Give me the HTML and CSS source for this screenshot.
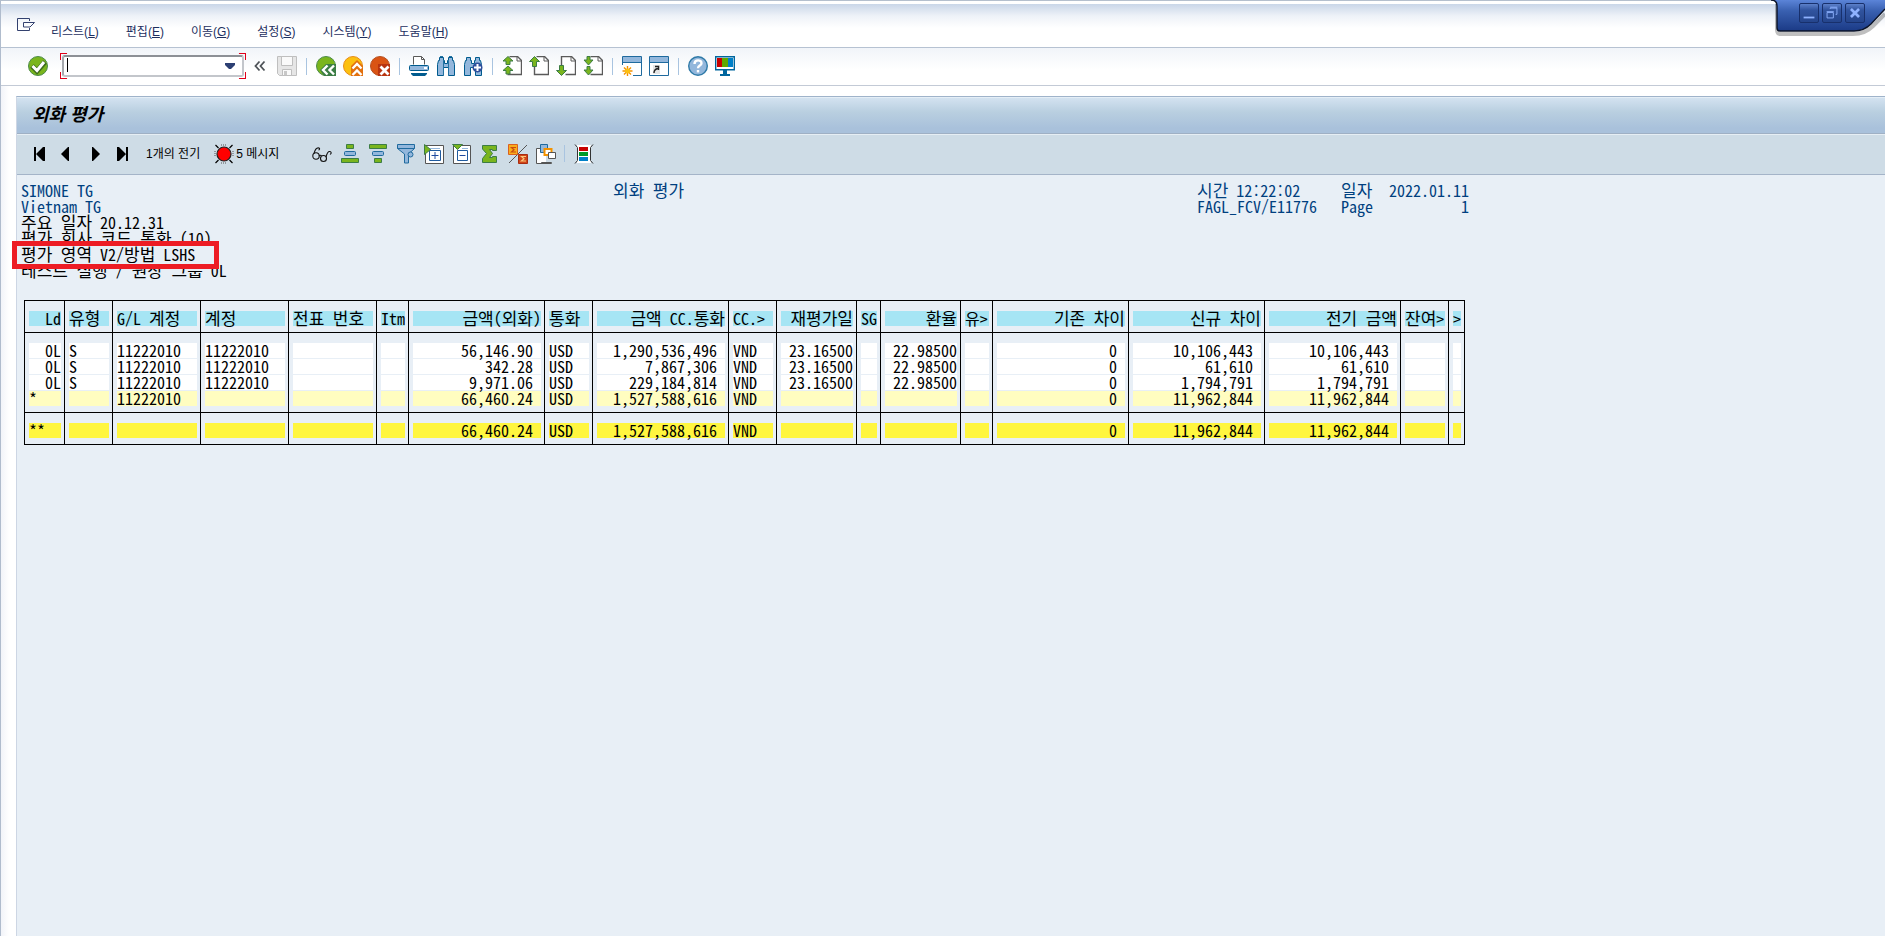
FILE: index.html
```html
<!DOCTYPE html>
<html lang="ko">
<head>
<meta charset="utf-8">
<title>외화 평가</title>
<link rel="stylesheet" href="styles.css">
</head>
<body>
<div class="window">
  <nav class="menubar">
    <button class="sysmenu" aria-label="메뉴"><svg width="20" height="16" viewBox="0 0 20 16" fill="none" stroke="#33416f" stroke-width="1"><path d="M12.500 3V.5H.5v12h12V10M6.500 4.500h11l-4.500 4.500H6.500z"/></svg></button>
    <a href="#">리스트(<u>L</u>)</a>
    <a href="#">편집(<u>E</u>)</a>
    <a href="#">이동(<u>G</u>)</a>
    <a href="#">설정(<u>S</u>)</a>
    <a href="#">시스템(<u>Y</u>)</a>
    <a href="#">도움말(<u>H</u>)</a>
  </nav>

  <div class="toolbar">
    <button class="tool" aria-label="실행"><svg viewBox="0 0 20 20"><circle cx="10" cy="10" r="9.500" fill="#7ab51d" stroke="#4c8b4a"/><path d="M4 10l5 5 8-9" fill="none" stroke="#3c6b1d" stroke-width="5"/><path d="M4.500 10l4.500 4.500 7-8.500" fill="none" stroke="#fff" stroke-width="3"/></svg></button>
    <div class="command">
      <input type="text" aria-label="명령 필드">
      <span class="caret"></span>
      <button class="drop" aria-label="이력"><svg width="12" height="8" viewBox="0 0 12 8"><path d="M1 1h10v2L7 7H5L1 3z" fill="#2c3f73"/></svg></button>
      <svg class="focus" viewBox="0 0 185 26" preserveAspectRatio="none"><path d="M.5 7V.5H7M178 .5h6.500V7M.5 19v6.500H7M178 25.500h6.500V19" fill="none" stroke="#e0001a"/></svg>
    </div>
    <button class="collapse" aria-label="접기"><svg width="12" height="12" viewBox="0 0 12 12"><path d="M5.500 1.500L1.500 6l4 4.500M10.500 1.500L6.500 6l4 4.500" fill="none" stroke="#4d5257" stroke-width="1.800"/></svg></button>
    <button class="tool" aria-label="저장"><svg viewBox="0 0 20 20"><path d="M.5.5h19v19h-17l-2-2z" fill="#e6e6e6" stroke="#bfbfbf"/><path d="M4.500.5h11v9h-11zM5.500 13.500h9v6h-9z" fill="#fafafa" stroke="#bfbfbf"/><path d="M7 15h3v4H7z" fill="#c8c8c8"/></svg></button>
    <span class="sep"></span>
    <button class="tool" aria-label="뒤로"><svg viewBox="0 0 20 20"><circle cx="10" cy="10" r="9.500" fill="#7ab51d" stroke="#4c8b4a"/><path d="M4 14l6-6h10v12H8z" fill="#3c7d45"/><path d="M11.500 9.500L7 14l4.500 4.500M18 9.500L13.500 14l4.500 4.500" fill="none" stroke="#fff" stroke-width="2.400"/></svg></button>
    <button class="tool" aria-label="종료"><svg viewBox="0 0 20 20"><circle cx="10" cy="10" r="9.500" fill="#fcc010" stroke="#e78c1a"/><path d="M8 10l6-6 6 6v10H8z" fill="#e2700e"/><path d="M9.500 12.500L14 8l4.500 4.500M9.500 19l4.500-4.500 4.500 4.500" fill="none" stroke="#fff" stroke-width="2.400"/></svg></button>
    <button class="tool" aria-label="취소"><svg viewBox="0 0 20 20"><circle cx="10" cy="10" r="9.500" fill="#da5414" stroke="#b5501f"/><path d="M8 8h12v12H8z" fill="#b83410"/><path d="M10.500 10.500l8 8M18.500 10.500l-8 8" fill="none" stroke="#fff" stroke-width="2.800"/></svg></button>
    <span class="sep"></span>
    <button class="tool" aria-label="인쇄"><svg viewBox="0 0 20 20"><path d="M4.500 8.500v-8h8l3 3v5" fill="#fff" stroke="#5a5a5a"/><path d="M12.500.5v3h3" fill="none" stroke="#5a5a5a"/><rect x=".5" y="9.500" width="19" height="5" rx="1" fill="#93b7dc" stroke="#005b8e"/><path d="M15 11h3v2h-3z" fill="#fff"/><path d="M2 17h16v1l-2 2H4l-2-2z" fill="#005b8e"/></svg></button>
    <button class="tool" aria-label="찾기"><svg viewBox="0 0 20 20"><path d="M3.500 1.500h4v3h1v3h3v-3h1v-3h4v3h1l1 4v11h-6v-8h-5v8h-6v-11l1-4h1z" fill="#93b7dc" stroke="#005b8e"/><path d="M4 .5h3M13 .5h3M7.500 5v14M12.500 5v14" stroke="#2272a2"/></svg></button>
    <button class="tool" aria-label="다음 찾기"><svg viewBox="0 0 20 20"><path d="M3.500 1.500h4v3h1v3h3v-3h1v-3h4v3h1l1 4v11h-6v-8h-5v8h-6v-11l1-4h1z" fill="#93b7dc" stroke="#005b8e"/><circle cx="14.500" cy="11.500" r="5" fill="#2d4f9c"/><path d="M14.500 8v7M11 11.500h7" stroke="#fff" stroke-width="2"/></svg></button>
    <span class="sep"></span>
    <button class="tool" aria-label="첫 페이지"><svg viewBox="0 0 20 20"><path d="M7.500.5h8l4 4v14h-14" fill="#fff" stroke="#5a5a5a" stroke-width="1.400"/><path d="M15 1v4h4" fill="none" stroke="#5a5a5a"/><path d="M6 .5l5 4.500H8v3.500H4V5H1zM6 10l5 4.500H8V18H4v-3.500H1z" fill="#7ab51d" stroke="#3c7d45"/></svg></button>
    <button class="tool" aria-label="이전 페이지"><svg viewBox="0 0 20 20"><path d="M7.500.5h8l4 4v14h-14V10" fill="#fff" stroke="#5a5a5a" stroke-width="1.400"/><path d="M15 1v4h4" fill="none" stroke="#5a5a5a"/><path d="M5.500 .5l5 5H7.500v5h-4v-5h-3z" fill="#7ab51d" stroke="#3c7d45"/></svg></button>
    <button class="tool" aria-label="다음 페이지"><svg viewBox="0 0 20 20"><path d="M5.500 10V.5h10l4 4v14h-10" fill="#fff" stroke="#5a5a5a" stroke-width="1.400"/><path d="M15 1v4h4" fill="none" stroke="#5a5a5a"/><path d="M5.500 19.500l5-5H7.500v-5h-4v5h-3z" fill="#7ab51d" stroke="#3c7d45"/></svg></button>
    <button class="tool" aria-label="마지막 페이지"><svg viewBox="0 0 20 20"><path d="M7.500.5h8l4 4v14h-12" fill="#fff" stroke="#5a5a5a" stroke-width="1.400"/><path d="M15 1v4h4" fill="none" stroke="#5a5a5a"/><path d="M4 .5h3V4h3L5.500 9 1 4h3zM4 10.500h3V14h3l-4.500 5L1 14h3z" fill="#7ab51d" stroke="#3c7d45"/></svg></button>
    <span class="sep"></span>
    <button class="tool" aria-label="새 세션"><svg viewBox="0 0 20 20"><path d="M.5.5h19v19H.5z" fill="#fff" stroke="#1f6a9e"/><path d="M1 1h18v5H1z" fill="#93b7dc"/><path d="M0 6.500h20" stroke="#1f6a9e"/><path d="M0 9h11v11H0z" fill="#fff"/><path d="M5.500 10v10M.5 15h10M2 11.500l7 7M9 11.500l-7 7" stroke="#f39200" stroke-width="1.400"/><circle cx="5.500" cy="15" r="2.500" fill="#fcc010"/></svg></button>
    <button class="tool" aria-label="바로가기 생성"><svg viewBox="0 0 20 20"><path d="M.5.5h19v19H.5z" fill="#fff" stroke="#1f6a9e"/><path d="M1 1h18v5H1z" fill="#93b7dc"/><path d="M0 6.500h20" stroke="#1f6a9e"/><path d="M4 9h7v9H4z" fill="#e5e5e5"/><path d="M5 17c0-3 1-4 4-4.500M6 10.500h3.500V14" fill="none" stroke="#222" stroke-width="1.400"/></svg></button>
    <span class="sep"></span>
    <button class="tool" aria-label="도움말"><svg viewBox="0 0 20 20"><circle cx="10" cy="10" r="9.300" fill="#93b7dc" stroke="#2f7aa8" stroke-width="1.400"/><path d="M6.500 8c0-5 7-4.500 7-.8 0 2.500-3.500 2.300-3.500 5" fill="none" stroke="#fff" stroke-width="2.400"/><path d="M8.800 14h2.400v2.400H8.800z" fill="#fff"/></svg></button>
    <button class="tool" aria-label="레이아웃 사용자 정의"><svg viewBox="0 0 20 20"><path d="M.7.7h18.600v13H.7z" fill="#fff" stroke="#00669e" stroke-width="1.400"/><path d="M2 2h5v9H2z" fill="#c80000"/><path d="M7 2h6v9H7z" fill="#5fa800"/><path d="M13 2h5v9h-5z" fill="#0080c8"/><path d="M8 14h4v4h3v2H5v-2h3z" fill="#00669e"/></svg></button>
  </div>

  <main class="panel">
    <h1 class="title">외화 평가</h1>
    <div class="toolbar app">
      <button class="tool" aria-label="처음"><svg viewBox="0 0 20 20"><path d="M5 3h2v14H5zM16 3v14h-2l-7-7 7-7z"/></svg></button>
      <button class="tool" aria-label="이전"><svg viewBox="0 0 20 20"><path d="M12 3v14h-1L4 10l7-7z"/></svg></button>
      <button class="tool" aria-label="다음"><svg viewBox="0 0 20 20"><path d="M7 3v14h1l7-7-7-7z"/></svg></button>
      <button class="tool" aria-label="마지막"><svg viewBox="0 0 20 20"><path d="M4 3v14h2l7-7-7-7zM13 3h2v14h-2z"/></svg></button>
      <button class="textbtn postings">1개의 전기</button>
      <button class="textbtn messages"><svg width="20" height="20" viewBox="0 0 20 20"><path d="M1.500 1l3 3M18.500 1l-3 3M1.500 19l3-3M18.500 19l-3-3" stroke="#000" stroke-width="1.200"/><path d="M7 1h6M7 19h6M1 7v6M19 7v6" stroke="#555" stroke-dasharray="1 1"/><circle cx="10" cy="10" r="7" fill="#f00" stroke="#222" stroke-width="1.200"/></svg>5 메시지</button>
      <button class="tool first" aria-label="상세"><svg viewBox="0 0 20 20" fill="none" stroke="#111" stroke-width="1.100"><circle cx="4" cy="12" r="3.200"/><circle cx="11.500" cy="14.500" r="3"/><path d="M2 9.500c1-4 3-6 5-5.500 1 .5.500 2-.5 2M7 12c1-1 2-1 2.500 0M14 13c1-4 2-6 4-5.500 2 .5 1 3 0 2.500"/></svg></button>
      <button class="tool" aria-label="오름차순"><svg viewBox="0 0 20 20"><path d="M6.500.5h7v4h-7zM1.500 14.500h17v4h-17z" fill="#7ab51d" stroke="#3c7d45"/><rect x="4.500" y="7.500" width="11" height="4" rx="1" fill="#93b7dc" stroke="#1f6a9e"/></svg></button>
      <button class="tool" aria-label="내림차순"><svg viewBox="0 0 20 20"><path d="M1.500.5h17v4h-17zM6.500 14.500h7v4h-7z" fill="#7ab51d" stroke="#3c7d45"/><rect x="4.500" y="7.500" width="11" height="4" rx="1" fill="#93b7dc" stroke="#1f6a9e"/></svg></button>
      <button class="tool" aria-label="필터"><svg viewBox="0 0 20 20"><path d="M1.500.5h17v4L12.500 10v9h-4v-9l-7-5.500z" fill="#93b7dc" stroke="#1f6a9e"/><path d="M1.500 4.500h17" stroke="#1f6a9e"/><circle cx="14.500" cy="10.500" r="2.500" fill="#93b7dc" stroke="#1f6a9e"/></svg></button>
      <button class="tool" aria-label="확장"><svg viewBox="0 0 20 20"><path d="M1.500 1.500h18v18h-18z" fill="#fff" stroke="#555"/><path d="M6 4h10v1H6z" fill="#93b7dc"/><path d="M5.500 6.500h11v10h-11z" fill="#fff" stroke="#1f5a9e"/><path d="M11 8v7M7.500 11.500h7" stroke="#1f4a9e"/><path d="M.5.5v10l6-5z" fill="#7ab51d" stroke="#3c7d45"/></svg></button>
      <button class="tool" aria-label="축소"><svg viewBox="0 0 20 20"><path d="M1.500 1.500h17v18h-17z" fill="#fff" stroke="#555"/><path d="M10 4h6v1h-6z" fill="#93b7dc"/><path d="M5.500 6.500h10v10h-10z" fill="#fff" stroke="#1f5a9e"/><path d="M7.500 11.500h6" stroke="#1f4a9e"/><path d="M.5.5h10l-5 5z" fill="#7ab51d" stroke="#3c7d45"/></svg></button>
      <button class="tool" aria-label="합계"><svg viewBox="0 0 20 20"><path d="M2.500 1.500h14v5h-4v-1h-3l3 4-3 4h3v-1h4v6h-14v-4l4-5-4-4.500z" fill="#7ab51d" stroke="#3c7d45"/></svg></button>
      <button class="tool" aria-label="소계"><svg viewBox="0 0 20 20"><path d="M19 1L1 19" stroke="#555"/><path d="M.5.500h9v10h-9z" fill="#f9ad1b" stroke="#da6020"/><path d="M8 3.500H3.500L6 5.700 3.500 8H8" fill="none" stroke="#c84a10" stroke-width="1.200"/><path d="M10.500 10.500h9v9h-9z" fill="#d14416" stroke="#a82c10"/><path d="M18 12.500h-4.500l2.500 2.300-2.500 2.200H18" fill="none" stroke="#fbc77a" stroke-width="1.200"/></svg></button>
      <button class="tool" aria-label="레이아웃"><svg viewBox="0 0 20 20"><path d="M.5 4.500h5v14h10v1H.5z" fill="#fff" stroke="#555"/><path d="M1 5h9v13H1z" fill="#fff"/><path d="M4.500.5h7v8h-7z" fill="#93b7dc" stroke="#1f6a9e"/><path d="M8.500 5h7v6h-7z" fill="#fff" stroke="#f39200" stroke-width="2"/><path d="M12.500 8.500h7v6h-7z" fill="#fff" stroke="#555"/></svg></button>
      <span class="sep"></span>
      <button class="tool" aria-label="색상 범례"><svg viewBox="0 0 20 20"><path d="M3 1h14v18H3z" fill="#fff"/><path d="M1 .5l2.500 3v13L1 19.500M19 .5l-2.500 3v13l2.500 3" fill="none" stroke="#333"/><path d="M5 3h9v4H5z" fill="#c80000"/><path d="M5 8h9v4H5z" fill="#009a28"/><path d="M5 13h9v4H5z" fill="#0080c8"/></svg></button>
    </div>

    <section class="list">
      <header class="listhead">
        <span>SIMONE TG</span><span class="k">외화 평가</span><span><span class="k">시간</span> 12:22:02</span><span class="k">일자</span><span class="r">2022.01.11</span>
        <span>Vietnam TG</span><span></span><span>FAGL_FCV/E11776</span><span>Page</span><span class="r">1</span>
      </header>
      <div class="params">
        <p><span class="k">주요 일자</span> 20.12.31</p>
        <p><span class="k">평가 회사 코드 통화</span> (10)</p>
        <p class="marked"><span class="box"><span class="k">평가 영역</span> V2/<span class="k">방법</span> LSHS</span></p>
        <p><span class="k">테스트 실행</span> / <span class="k">원장 그룹</span> 0L</p>
      </div>
      <table class="grid">
        <colgroup><col class="c5"><col class="c6"><col class="c11"><col class="c11"><col class="c11"><col class="c4"><col class="c17"><col class="c6"><col class="c17"><col class="c6"><col class="c10"><col class="c3"><col class="c10"><col class="c4"><col class="c17"><col class="c17"><col class="c17"><col class="c6"><col class="c2"></colgroup>
        <thead>
          <tr><th class="r">Ld</th><th><span class="k">유형</span></th><th>G/L <span class="k">계정</span></th><th><span class="k">계정</span></th><th><span class="k">전표 번호</span></th><th>Itm</th><th class="r"><span class="k">금액</span>(<span class="k">외화</span>)</th><th><span class="k">통화</span></th><th class="r"><span class="k">금액</span> CC.<span class="k">통화</span></th><th>CC.&gt;</th><th class="r"><span class="k">재평가일</span></th><th>SG</th><th class="r"><span class="k">환율</span></th><th>유&gt;</th><th class="r"><span class="k">기존 차이</span></th><th class="r"><span class="k">신규 차이</span></th><th class="r"><span class="k">전기 금액</span></th><th><span class="k">잔여</span>&gt;</th><th>&gt;</th></tr>
        </thead>
        <tbody>
          <tr class="top"><td class="r">0L</td><td>S</td><td>11222010</td><td>11222010</td><td></td><td></td><td class="amt">56,146.90</td><td>USD</td><td class="amt">1,290,536,496</td><td>VND</td><td class="r">23.16500</td><td></td><td class="r">22.98500</td><td></td><td class="amt">0</td><td class="amt">10,106,443</td><td class="amt">10,106,443</td><td></td><td></td></tr>
          <tr><td class="r">0L</td><td>S</td><td>11222010</td><td>11222010</td><td></td><td></td><td class="amt">342.28</td><td>USD</td><td class="amt">7,867,306</td><td>VND</td><td class="r">23.16500</td><td></td><td class="r">22.98500</td><td></td><td class="amt">0</td><td class="amt">61,610</td><td class="amt">61,610</td><td></td><td></td></tr>
          <tr><td class="r">0L</td><td>S</td><td>11222010</td><td>11222010</td><td></td><td></td><td class="amt">9,971.06</td><td>USD</td><td class="amt">229,184,814</td><td>VND</td><td class="r">23.16500</td><td></td><td class="r">22.98500</td><td></td><td class="amt">0</td><td class="amt">1,794,791</td><td class="amt">1,794,791</td><td></td><td></td></tr>
          <tr class="sub"><td>*</td><td></td><td>11222010</td><td></td><td></td><td></td><td class="amt">66,460.24</td><td>USD</td><td class="amt">1,527,588,616</td><td>VND</td><td></td><td></td><td></td><td></td><td class="amt">0</td><td class="amt">11,962,844</td><td class="amt">11,962,844</td><td></td><td></td></tr>
        </tbody>
        <tfoot>
          <tr><td>**</td><td></td><td></td><td></td><td></td><td></td><td class="amt">66,460.24</td><td>USD</td><td class="amt">1,527,588,616</td><td>VND</td><td></td><td></td><td></td><td></td><td class="amt">0</td><td class="amt">11,962,844</td><td class="amt">11,962,844</td><td></td><td></td></tr>
        </tfoot>
      </table>
    </section>
  </main>

  <div class="controls">
    <svg class="tab" viewBox="0 0 114 37"><defs><linearGradient id="tabfill" x1="0" y1="0" x2="0" y2="1"><stop offset="0" stop-color="#5b84d8"/><stop offset=".35" stop-color="#3960b0"/><stop offset="1" stop-color="#1b3a86"/></linearGradient></defs><path d="M6 4v26q0 4 4 4h72q12 0 20-8l12-12" fill="none" stroke="#000" stroke-opacity=".25" stroke-width="4"/><path d="M0 0q6 0 6 6v22q0 3 3 3h74q10 0 17-7l14-15V0z" fill="url(#tabfill)"/><path d="M0 0q6 0 6 6v22q0 3 3 3h74q10 0 17-7l14-15" fill="none" stroke="#0a1226" stroke-width="1.400"/></svg>
    <div class="winbtns">
      <button aria-label="최소화"><svg viewBox="0 0 20 20"><path d="M4 14h12v2H4z" fill="#8fb2ff"/></svg></button>
      <button aria-label="복원"><svg viewBox="0 0 20 20" fill="none" stroke="#8fb2ff"><path d="M4.500 9.500h7v6h-7zM4 8.500h8M8 5.500v-1h7.500v7H14M8 3.500h8"/></svg></button>
      <button aria-label="닫기"><svg viewBox="0 0 20 20"><path d="M5.500 5.500l9 9M14.500 5.500l-9 9" stroke="#8fb2ff" stroke-width="3"/></svg></button>
    </div>
  </div>
</div>
</body>
</html>
```
FILE: styles.css
```css
* { box-sizing: border-box; }

body {
  margin: 0;
  background: #fff;
  color: #000;
  font: 12px/16px "Liberation Sans", "Noto Sans CJK KR", sans-serif;
}

button {
  padding: 0;
  border: 0;
  background: none;
  font: inherit;
  color: inherit;
}

svg { display: block; }

.window {
  position: relative;
  display: flex;
  flex-direction: column;
  min-height: 100vh;
  border-left: 1px solid #b0bccd;
  border-top: 1px solid #b4bfcd;
  background: linear-gradient(to right, #f2f4f9, #fff 8px);
}

.menubar {
  display: flex;
  align-items: flex-start;
  gap: 27px;
  height: 47px;
  padding: 17px 16px 0;
  border-top: 3px solid #fff;
  border-bottom: 1px solid #b6c2d2;
  background: linear-gradient(#c9d6e8, #eef2f8 12px, #fff 24px);
  color: #1d2f5f;
}

.menubar a {
  padding-top: 3px;
  color: inherit;
  text-decoration: none;
}

.sysmenu {
  width: 20px;
  margin-right: -13px;
  margin-top: -3px;
}

.toolbar {
  display: flex;
  align-items: center;
  gap: 7px;
  height: 38px;
  padding: 0 27px 1px;
  border-bottom: 1px solid #c3cad6;
  background: linear-gradient(#f1f4f9, #fff 22px);
}

.tool,
.tool svg {
  width: 20px;
  height: 20px;
}

.tool { flex: none; }

.sep {
  flex: none;
  width: 5px;
  height: 17px;
  border-left: 2px solid transparent;
  border-right: 2px solid transparent;
  background: #a9c4e0 padding-box;
}

.command {
  position: relative;
  display: flex;
  width: 182px;
  margin: 0 3px 0 7px;
  border: 2px solid #a6a9ae;
  border-color: #8d9096 #c3c6cb #c3c6cb #a6a9ae;
  border-radius: 3px;
  background: #fff;
}

.command input {
  flex: 1;
  min-width: 0;
  height: 18px;
  padding: 0 4px;
  border: 0;
  outline: 0;
  background: none;
  font: inherit;
}

.drop {
  display: flex;
  align-items: center;
  padding-right: 6px;
}

.caret {
  position: absolute;
  left: 3px;
  top: 1px;
  width: 1px;
  height: 14px;
  background: #000;
}

.focus {
  position: absolute;
  left: -4px;
  top: -4px;
  width: 186px;
  height: 26px;
  pointer-events: none;
}

.collapse { margin-right: 4px; }

.panel {
  flex: 1;
  margin: 10px 0 0 15px;
  border-left: 1px solid #cdd6e4;
  border-top: 1px solid #9fb3ca;
  background: #e8eff6;
}

.title {
  margin: 0;
  padding: 6px 15px 7px;
  border-top: 1px solid #e4eef6;
  border-bottom: 1px solid #9fb0c4;
  background: linear-gradient(#d3e2f0, #b9cfe0 14px, #a9c1db 30px);
  font-size: 18px;
  line-height: 22px;
  font-style: italic;
  font-weight: 700;
}

.app {
  gap: 8px;
  height: 41px;
  padding: 0 12px 2px;
  border-top: 1px solid #e6eef4;
  border-bottom-color: #a4b4c8;
  background: #cedce6;
}

.app .sep {
  width: 2px;
  border-left: 0;
  border-right-width: 1px;
}

.textbtn {
  display: flex;
  align-items: center;
  gap: 2px;
}

.postings { margin: 0 0 0 5px; }
.messages { margin-left: 6px; }
.first { margin-left: 25px; }

.list {
  padding: 7px 4px;
  font: 16px/16px "Noto Sans Mono CJK KR", "Liberation Mono", "Noto Sans CJK KR", monospace;
  white-space: nowrap;
}

.k { font-size: 17px; }
.params .k,
.grid .k { line-height: 0; }

.listhead {
  display: grid;
  grid-template-columns: 592px 584px 144px 48px 80px;
  grid-auto-rows: 16px;
  color: #003f7f;
}

.params p {
  height: 16px;
  margin: 0;
}

.marked { position: relative; }

.box {
  position: absolute;
  left: -9px;
  top: -5px;
  z-index: 1;
  width: 207px;
  padding: 0 4px 2px;
  border: 5px solid #ed1c24;
  background: #e8eff6;
}

.grid {
  margin: 22px 3px 0;
  border-collapse: separate;
  border-spacing: 0;
  border: solid #000;
  border-width: 1px 0 0 1px;
  table-layout: fixed;
  width: 1441px;
}

.grid th,
.grid td {
  height: 16px;
  padding: 0 3px 1px 4px;
  border-right: 1px solid #000;
  background: #fff content-box;
  font-weight: 400;
  line-height: 15px;
  text-align: left;
}

.grid th,
.grid tfoot td {
  height: 32px;
  padding-top: 10px;
  padding-bottom: 6px;
  border-bottom: 1px solid #000;
}

.grid th { background-color: #a6e5f4; }
.grid tfoot td { background-color: #fff63f; }

.grid .top td {
  height: 26px;
  padding-top: 10px;
}

.grid .sub td {
  height: 22px;
  padding-bottom: 6px;
  border-bottom: 1px solid #000;
  background-color: #fffdc0;
}

.grid .r,
.grid .amt,
.listhead .r { text-align: right; }

.grid .amt::after { content: "\00a0"; }

.c2 { width: 16px; }
.c3 { width: 24px; }
.c4 { width: 32px; }
.c5 { width: 40px; }
.c6 { width: 48px; }
.c10 { width: 80px; }
.c11 { width: 88px; }
.c17 { width: 136px; }

.controls {
  position: absolute;
  right: 0;
  top: -1px;
  width: 114px;
  height: 37px;
}

.tab {
  width: 114px;
  height: 37px;
}

.winbtns {
  position: absolute;
  right: 20px;
  top: 3px;
  display: flex;
  gap: 3px;
}

.winbtns button {
  width: 20px;
  height: 20px;
  border: 1px solid #18306c;
  border-radius: 2px;
  background: linear-gradient(#5c80ca, #31549f 6px, #25458c);
}
```
